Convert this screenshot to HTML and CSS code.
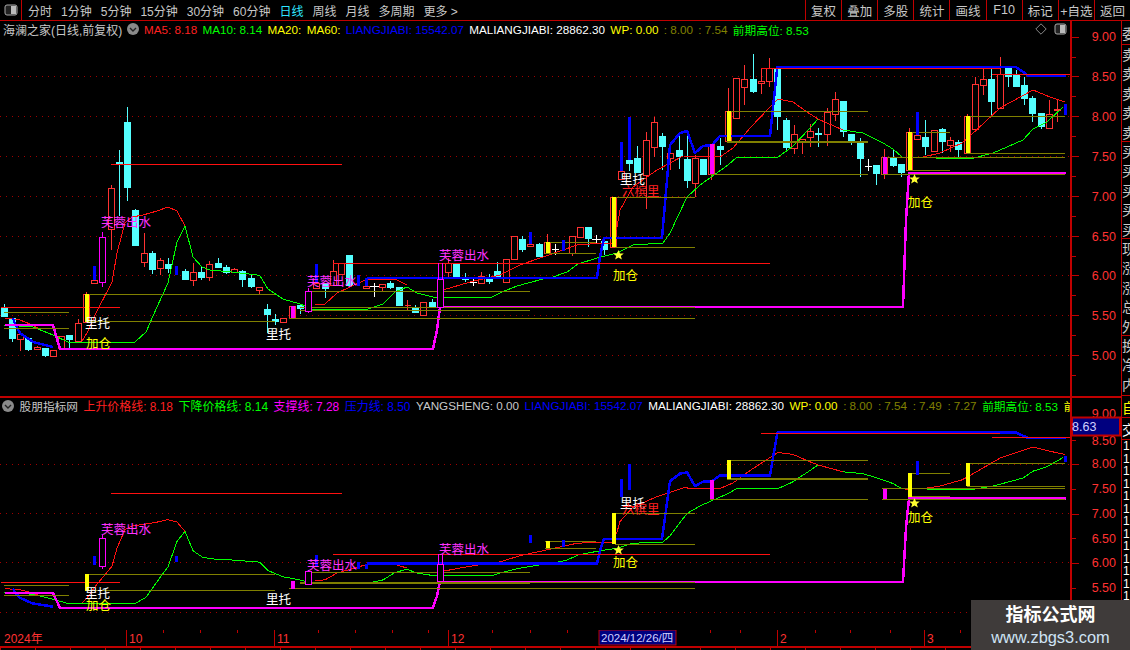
FILE: index.html
```html
<!DOCTYPE html>
<html lang="zh-CN">
<head>
<meta charset="utf-8">
<title>海澜之家 K线</title>
<link rel="stylesheet" href="styles.css">
</head>
<body>
<div class="app">
  <header class="toolbar">
    <div class="layout-btn"><svg width="14" height="12" viewBox="0 0 14 12"><rect x="1" y="1" width="12" height="10" rx="2" class="ic-frame"/><rect x="7" y="2" width="5" height="8" class="ic-fill"/></svg></div>
    <nav class="periods">
      <span>分时</span><span>1分钟</span><span>5分钟</span><span>15分钟</span><span>30分钟</span><span>60分钟</span><span class="active">日线</span><span>周线</span><span>月线</span><span>多周期</span><span>更多 &gt;</span>
    </nav>
    <nav class="tools">
      <span>复权</span><span>叠加</span><span>多股</span><span>统计</span><span>画线</span><span>F10</span><span>标记</span><span>+自选</span><span>返回</span>
    </nav>
  </header>

  <div class="body-row">
    <div class="charts">
      <section class="panel main-panel">
        <div class="info">
          <span class="grey name">海澜之家(日线,前复权)</span>
          <svg class="chev" width="12" height="12" viewBox="0 0 12 12"><circle cx="6" cy="6" r="6" class="chev-bg"/><path d="M3 5l3 3 3-3" class="chev-line"/></svg>
          <span class="red">MA5: 8.18</span><span class="green">MA10: 8.14</span><span class="yellow">MA20:</span><span class="yellow">MA60:</span><span class="blue">LIANGJIABI: 15542.07</span><span class="white">MALIANGJIABI: 28862.30</span><span class="yellow">WP: 0.00</span><span class="olive">: 8.00</span><span class="olive">: 7.54</span><span class="green">前期高位: 8.53</span>
          <span class="info-tools">
            <svg width="12" height="12" viewBox="0 0 12 12"><path d="M6 .8L11.2 6 6 11.2 .8 6z" class="diamond"/></svg>
            <svg width="13" height="12" viewBox="0 0 13 12"><rect x="1" y="1" width="11" height="10" rx="2" class="ic-frame"/><rect x="6" y="2" width="5" height="8" class="ic-fill"/></svg>
          </span>
        </div>
        <svg class="plot main-plot" viewBox="0 39 1070 357" width="1070" height="357">
          <path class="dots" d="M0 76.5H1069M0 116.5H1069M0 156.5H1069M0 196.5H1069M0 236.5H1069M0 275.5H1069M0 315.5H1069M0 355.5H1069"/>
          <path class="wick" d="M20.5 334V351M37.5 346V350M53.5 350V357M78.5 319V341M86.5 292V322M111.5 185V250M144.5 233V267M160.5 258V275M193.5 263V286M209.5 261V281M234.5 268V272M259.5 287V294M407.5 300V310M404.5 305H411M382.5 284V292M423.5 302V315M448.5 258V277M481.5 272V283M547.5 234V253M333.5 260V285M506.5 259V282M514.5 236V259M572.5 236V256M580.5 227V237M613.5 197V247M646.5 132V209M654.5 117V157M670.5 153V170M695.5 155V197M711.5 144V180M728.5 88V141M736.5 78V118M744.5 65V105M761.5 68V94M769.5 58V87M794.5 125V154M802.5 139V154M810.5 124V147M827.5 108V146M835.5 92V121M884.5 149V179M909.5 128V170M934.5 130V151M950.5 137V152M967.5 114V153M975.5 77V129M983.5 67V95M1000.5 57V108M1049.5 100V128M1057.5 100V122M1054 109.5H1061"/>
          <path class="rbody" d="M17.5 334h6v5h-6zM34.5 347h6v2.500h-6zM50.500 350h6v6h-6zM58.500 336h6v12h-6zM75.500 323h6v18h-6zM83.500 294h6v28h-6zM91.500 280h6v3h-6zM108.500 188h6v41h-6zM141.500 253h6v9h-6zM157.500 260h6v8h-6zM190.500 272h6v8h-6zM206.500 264h6v13h-6zM231.500 269h6v3h-6zM256.500 287h6v3h-6zM280.500 318h6v4h-6zM289.500 306h6v12h-6zM313.500 283h6v5h-6zM330.500 271h6v14h-6zM338.500 263h6v11h-6zM363.500 286h6v2h-6zM379.500 284h6v3h-6zM420.500 302h6v13h-6zM445.500 263h6v9h-6zM478.500 276h6v7h-6zM503.500 259h6v23h-6zM511.500 236h6v23h-6zM527.500 244h6v2h-6zM544.500 242h6v11h-6zM569.500 236h6v17h-6zM577.500 227h6v10h-6zM610.500 197h6v50h-6zM618.500 171h6v8h-6zM643.500 140h6v35h-6zM651.500 122h6v25h-6zM667.500 153h6v5h-6zM692.500 158h6v25h-6zM708.500 144h6v30h-6zM725.500 111h6v30h-6zM733.500 78h6v40h-6zM741.500 79h6v8h-6zM758.500 81.500h6v2h-6zM766.500 68h6v13h-6zM791.500 134h6v14h-6zM799.500 139h6v2h-6zM807.500 131h6v6h-6zM824.500 112h6v22h-6zM832.500 99h6v15h-6zM881.500 157h6v17h-6zM906.500 132h6v38h-6zM914.500 135h6v4h-6zM931.500 130h6v21h-6zM947.500 140h6v5h-6zM964.500 116h6v37h-6zM972.500 84h6v45h-6zM980.500 79h6v6h-6zM997.500 74h6v34h-6zM1046.500 114h6v14h-6zM1054.500 109h6v1h-6z"/>
          <path class="cyan" d="M4.500 304V316M1.500 307h6V316h-6zM12.500 318V342M9.500 318h6V338h-6zM28.500 338V351M25.500 338h6V349h-6zM45.500 348V357M42.500 348h6V355h-6zM69.500 335V348M66.500 335h6V339h-6zM119.500 150V216M116.500 162h6V164h-6zM127.500 107V201M124.500 122h6V187h-6zM135.500 209V245M132.500 210h6V245h-6zM152.500 251V274M149.500 253h6V269h-6zM168.500 258V273M165.500 264h6V268h-6zM185.500 269V279M182.500 271h6V279h-6zM201.500 266V280M198.500 272h6V277h-6zM218.500 258V267M215.500 263h6V267h-6zM226.500 265V274M223.500 267h6V272h-6zM242.500 270V287M239.500 271h6V279h-6zM251.500 275V288M248.500 278h6V286h-6zM267.500 304V333M264.500 309h6V314h-6zM275.500 314V325M272.500 319h6V321h-6zM300.500 305V314M297.500 305h6V308h-6zM325.500 283V298M322.500 283h6V288h-6zM349.500 255V285M346.500 255h6V285h-6zM390.500 281V289M387.500 283h6V287h-6zM399.500 287V305M396.500 287h6V305h-6zM415.500 305V313M412.500 307h6V312h-6zM432.500 299V306M429.500 302h6V306h-6zM456.500 264V277M453.500 264h6V277h-6zM465.500 273V282M462.500 278h6V279h-6zM489.500 274V284M486.500 279h6V281h-6zM497.500 262V278M494.500 271h6V278h-6zM522.500 236V252M519.500 239h6V249h-6zM539.500 243V257M536.500 244h6V256h-6zM588.500 227V247M585.500 227h6V238h-6zM604.500 241V255M601.500 241h6V249h-6zM629.500 160V171M626.500 160h6V163h-6zM637.500 146V172M634.500 158h6V172h-6zM662.500 133V170M659.500 136h6V146h-6zM679.500 135V169M676.500 150h6V156h-6zM687.500 133V188M684.500 159h6V180h-6zM703.500 159V174M700.500 159h6V174h-6zM720.500 138V165M717.500 146h6V149h-6zM753.500 54V93M750.500 79h6V91h-6zM777.500 68V130M774.500 68h6V116h-6zM786.500 118V152M783.500 120h6V147h-6zM818.500 128V147M815.500 133.500h6V134.500h-6zM843.500 101V137M840.500 101h6V131h-6zM851.500 134V145M848.500 134h6V141h-6zM860.500 138V177M857.500 143h6V158h-6zM876.500 165V185M873.500 165h6V173h-6zM893.500 150V167M890.500 157h6V165h-6zM901.500 164V177M898.500 164h6V172h-6zM925.500 120V155M922.500 137h6V146h-6zM942.500 128V153M939.500 129h6V141h-6zM958.500 140V159M955.500 142h6V149h-6zM991.500 68V117M988.500 79h6V101h-6zM1008.500 68V87M1005.500 68h6V76h-6zM1016.500 70V87M1013.500 75h6V86h-6zM1024.500 77V105M1021.500 85h6V98h-6zM1032.500 96V122M1029.500 98h6V113h-6zM1041.500 113V129M1038.500 113h6V126h-6z"/>
          <path class="doji" d="M374.500 283V297M370 286.500H379M473.500 278V286M470 282.500H477M555.500 244V255M552 249.500H559M596.500 235V243M592 239.500H601M868.500 159V171M865 166.500H872"/>
          <use href="#shared"/>
          <g class="mark-text">
            <text class="t-mag" x="101" y="227">芙蓉出水</text>
            <text class="t-mag" x="307" y="286">芙蓉出水</text>
            <text class="t-mag" x="439" y="260">芙蓉出水</text>
            <text class="t-white" x="85" y="328">里托</text>
            <text class="t-white" x="266" y="339">里托</text>
            <text class="t-white" x="620" y="184">里托</text>
            <text class="t-red" x="622" y="196">六槟里</text>
            <text class="t-yel" x="86" y="348">加仓</text>
            <text class="t-yel" x="613" y="280">加仓</text>
            <text class="t-yel" x="908" y="207">加仓</text>
          </g>
          <path class="star" d="M618.500 250l1.500 3.500h3.800l-3 2.400 1.100 3.700-3.400-2.100-3.400 2.100 1.100-3.700-3-2.400h3.800zM914.500 174l1.500 3.500h3.800l-3 2.400 1.100 3.700-3.400-2.100-3.400 2.100 1.100-3.700-3-2.400h3.800z"/>
          <defs>
            <g id="shared">
              <polyline class="ma-g" points="4,325 33,327 53,335 68,342 135,342 146,332 157,307 168,283 177,242 185,226 193,257 202,267 210,270 232,272 257,275 260,276 268,289 283,299 300,304 312,309 368,309 383,304 395,292 407,287 417,293 433,297 492,297 502,292 517,286 543,279 553,277 567,272 578,264 597,258 617,253 633,245 663,243 670,233 687,197 700,185 728,165 737,157 778,157 792,147 810,128 818,119 843,130 863,133 883,143 893,149 902,157 970,159 993,153 1007,147 1023,140 1033,129 1047,122 1063,107"/>
              <polyline class="ma-r" points="5,318 20,320 30,324 38,328"/>
              <polyline class="ma-r" points="82,341 87,333 96,313 112,282 117,253 125,223 132,217 143,215 157,211 168,207 177,211 185,226"/>
              <polyline class="ma-r" points="315,305 325,304 337,293 350,287 365,280 395,279 407,285"/>
              <polyline class="ma-r" points="443,290 470,282 500,275 520,265 543,257 577,245 603,243 612,243 617,227 620,210 633,187 657,170 683,156 720,157 733,148 750,128 770,107 778,99 793,102 807,112 818,119 843,130"/>
              <polyline class="ma-r" points="905,158 923,157 940,153 962,143 970,136 1000,108 1033,90 1050,97 1065,102"/>
              <polyline class="blue-l" points="13,318 15,324 20,333 33,342 53,347"/>
              <polyline class="blue-l" points="367,278 597,278 600,257 604,238 662,238 670,145 680,133 687,131 695,153 703,146 712,145 720,136 770,136 777,70 777,67 1016,67 1028,75.500 1066,75.500"/>
              <polyline class="mag-l" points="5,325 53,325 60,349 433,349 437,330 440,307"/>
              <polyline class="mag-l" points="695,307 903,307 906,220 909,173 1066,173"/>
              <path class="mag-thin" d="M440 306.500H695"/>
              <path class="olive-l" d="M4 312.500H69M4 328.500H69M85 294.500H275M85 321.500H275M289 318.500H695M308 291.500H530M300 310.500H530M300 307.500H695M545 242.500H596M545 253.500H596M615 197.500H695M615 247.500H695M727 111.500H868M710 174.500H868M882 157.500H1065M882 174.500H1065M908 132.500H950M908 170.500H950M967 116.500H1065M967 153.500H1065"/>
              <path class="olive-t" d="M727 142H868"/>
              <path class="red-l" d="M111 164.500H342M1 307.500H120M333 263.500H770M761 68.500H1000M992 74.500H1070"/>
              <path class="blue-b" d="M94.500 266V280M176.500 266V275M316.500 264V283M358.500 275V286M366.500 278V286M530.500 232V244M563.500 240V251M621.500 142V171M629.500 117V160M917.500 112V135M1065.500 104V115"/>
              <path class="yel-b" d="M86.500 294V322M547.500 242V253M613.500 197V247M728.500 111V141M909.500 132V170M967.500 116V153"/>
              <path class="mag-b" d="M292.500 306V318M711.500 144V174M884.500 157V174"/>
              <path class="mag-c" d="M102.500 232V237M102.500 282V287M99.500 237h6v45h-6zM308.500 288V291M308.500 311V313M305.500 291h6v20h-6zM438.500 263V279M442.500 263V279M437.500 279h6v28h-6z"/>
            </g>
          </defs>
        </svg>
      </section>

      <section class="panel lower-panel">
        <div class="info info-lower">
          <svg class="chev chev-lower" width="12" height="12" viewBox="0 0 12 12"><circle cx="6" cy="6" r="6" class="chev-bg"/><path d="M3 5l3 3 3-3" class="chev-line"/></svg>
          <span class="grey">股朋指标网</span><span class="red cj">上升价格线: 8.18</span><span class="green cj">下降价格线: 8.14</span><span class="mag cj">支撑线: 7.28</span><span class="blue cj">压力线: 8.50</span><span class="grey">YANGSHENG: 0.00</span><span class="blue">LIANGJIABI: 15542.07</span><span class="white">MALIANGJIABI: 28862.30</span><span class="yellow">WP: 0.00</span><span class="olive">: 8.00</span><span class="olive">: 7.54</span><span class="olive">: 7.49</span><span class="olive">: 7.27</span><span class="green">前期高位: 8.53</span><span class="yellow">前</span>
        </div>
        <svg class="plot lower-plot" viewBox="0 413 1070 217" width="1070" height="217">
          <path class="dots" d="M0 464.500H1069M0 513.500H1069M0 562.500H1069M0 612.500H1069"/>
          <use href="#shared" transform="matrix(1 0 0 .6214 0 391)"/>
          <g class="mark-text">
            <text class="t-mag" x="101" y="534">芙蓉出水</text>
            <text class="t-mag" x="307" y="570">芙蓉出水</text>
            <text class="t-mag" x="439" y="554">芙蓉出水</text>
            <text class="t-white" x="85" y="598">里托</text>
            <text class="t-white" x="266" y="604">里托</text>
            <text class="t-white" x="620" y="508">里托</text>
            <text class="t-red" x="622" y="514">六槟里</text>
            <text class="t-yel" x="86" y="610">加仓</text>
            <text class="t-yel" x="613" y="567">加仓</text>
            <text class="t-yel" x="908" y="522">加仓</text>
          </g>
          <path class="star" d="M618.500 545l1.500 3.500h3.800l-3 2.400 1.100 3.700-3.400-2.100-3.400 2.100 1.100-3.700-3-2.400h3.800zM914.500 498l1.500 3.500h3.800l-3 2.400 1.100 3.700-3.400-2.100-3.400 2.100 1.100-3.700-3-2.400h3.800z"/>
        </svg>
      </section>
    </div>

    <svg class="axis" viewBox="1072 21 49 609" width="49" height="609">
      <path class="ticks" d="M1072 37.500h7M1072 76.500h7M1072 116.500h7M1072 156.500h7M1072 196.500h7M1072 236.500h7M1072 275.500h7M1072 315.500h7M1072 355.500h7M1072 57.500h4M1072 96.500h4M1072 136.500h4M1072 176.500h4M1072 216.500h4M1072 256.500h4M1072 295.500h4M1072 335.500h4M1072 375.500h4M1072 464.500h7M1072 514.500h7M1072 563.500h7M1072 440.500h4M1072 489.500h4M1072 538.500h4M1072 588.500h4"/>
      <path class="sep" d="M1072 396.500H1121"/>
      <g class="prices">
        <text x="1116" y="41">9.00</text><text x="1116" y="81">8.50</text><text x="1116" y="121">8.00</text><text x="1116" y="161">7.50</text><text x="1116" y="201">7.00</text><text x="1116" y="241">6.50</text><text x="1116" y="280">6.00</text><text x="1116" y="320">5.50</text><text x="1116" y="360">5.00</text>
        <text x="1116" y="418">9.00</text><text x="1116" y="445">8.50</text><text x="1116" y="468">8.00</text><text x="1116" y="493">7.50</text><text x="1116" y="518">7.00</text><text x="1116" y="543">6.50</text><text x="1116" y="567">6.00</text><text x="1116" y="592">5.50</text>
      </g>
      <rect class="cur-box" x="1072" y="417.500" width="48" height="18"/>
      <text class="cur-text" x="1072" y="431">8.63</text>
    </svg>

    <aside class="side">
      <div class="cell c1">委</div>
      <div class="cell c2">卖卖卖卖卖</div>
      <div class="cell c2">买买买买买</div>
      <div class="cell c2">现涨涨总外</div>
      <div class="cell c3">换净内</div>
      <div class="cell c4">自</div>
      <div class="cell c5">交</div>
      <div class="nums">1 1 1 1 1 1 1 1 1 1 1 1 1 1 1 1</div>
    </aside>
  </div>

  <svg class="timeaxis" viewBox="0 0 1130 16" width="1130" height="16">
    <path class="ticks" d="M163.500 0v3M200.500 0v3M237.500 0v3M318.500 0v3M355.500 0v3M392.500 0v3M428.500 0v3M492.500 0v3M530.500 0v3M567.500 0v3M710.500 0v3M740.500 0v3M815.500 0v3M850.500 0v3M890.500 0v3M960.500 0v3"/>
    <path class="sep-thin" d="M126.500 0v16M274.500 0v16M448.500 0v16M777.500 0v16M924.500 0v16"/>
    <g class="times">
      <text x="4" y="13">2024年</text><text x="129" y="13">10</text><text x="277" y="13">11</text><text x="451" y="13">12</text><text x="780" y="13">2</text><text x="927" y="13">3</text>
    </g>
    <rect class="date-box" x="599" y="0" width="77" height="15"/>
    <text class="date-text" x="601" y="12">2024/12/26/四</text>
  </svg>
  <div class="foot"></div>

  <div class="watermark">
    <div class="wm-title">指标公式网</div>
    <div class="wm-url">www.zbgs3.com</div>
  </div>
</div>
</body>
</html>
```
FILE: styles.css
```css
* { box-sizing: border-box; }
html, body { margin: 0; padding: 0; background: #000; }
body { font-family: "Liberation Sans", "Noto Sans CJK SC", sans-serif; font-size: 11.7px; color: #c8c8c8; }
svg { display: block; flex: none; }

.app { position: relative; width: 1130px; height: 650px; overflow: hidden; display: flex; flex-direction: column; background: #000; }

.toolbar { display: flex; align-items: stretch; height: 21px; flex: none; border-bottom: 1px solid #c00000; font-size: 12px; color: #c8c8c8; }
.layout-btn { width: 22px; border-right: 1px solid #c00000; display: flex; align-items: center; justify-content: center; }
.periods { display: flex; align-items: center; gap: 9px; padding-left: 6px; flex: 1; white-space: nowrap; }
.periods .active { color: #2ee6ff; }
.tools { display: flex; width: 325px; }
.tools span { flex: 1; display: flex; align-items: center; justify-content: center; border-left: 1px solid #c00000; white-space: nowrap; font-size: 12.5px; }
.ic-frame { fill: #222; stroke: #aaa; stroke-width: 1; }
.ic-fill { fill: #bbb; }

.body-row { display: flex; flex: none; height: 609px; }
.charts { width: 1072px; display: flex; flex-direction: column; flex: none; border-right: 2px solid #c00000; }
.panel { display: flex; flex-direction: column; flex: none; }
.main-panel { height: 375px; }
.lower-panel { height: 234px; border-top: 2px solid #c00000; }
.info { display: flex; align-items: center; height: 18px; gap: 5.3px; padding: 0 0 2px 3px; white-space: nowrap; overflow: hidden; flex: none; }
.info-lower { height: 15px; padding: 0 0 0 2px; gap: 5.5px; }
.cj { font-size: 11.95px; }
.name { font-size: 12px; }
.chev { margin-left: -1px; }
.chev-lower { margin-left: 0; }
.chev-bg { fill: #8a8a8a; }
.chev-line { fill: none; stroke: #222; stroke-width: 1.4; }
.info-tools { margin-left: auto; display: flex; gap: 7px; align-items: center; padding-right: 3px; }
.diamond { fill: none; stroke: #888; }
.grey { color: #c8c8c8; }
.red { color: #ff2020; }
.green { color: #00ff00; }
.yellow { color: #ffff00; }
.blue { color: #0000ff; }
.white { color: #fff; }
.olive { color: #808000; }
.mag { color: #ff00ff; }

.plot { background: #000; }
.dots { stroke: #a00000; stroke-width: 1; stroke-dasharray: 1 5; fill: none; shape-rendering: crispEdges; }
.wick, .rbody, .cyan, .doji, .olive-l, .olive-t, .red-l, .blue-b, .yel-b, .mag-b, .mag-c, .mag-thin, .blue-l, .mag-l, .ma-g, .ma-r { shape-rendering: crispEdges; }
.wick { stroke: #ff3232; fill: none; }
.rbody { stroke: #ff3232; fill: #000; }
.cyan { stroke: #54ffff; fill: #54ffff; }
.doji { stroke: #fff; fill: none; }
#shared path, #shared polyline { vector-effect: non-scaling-stroke; fill: none; }
.olive-l { stroke: #808000; stroke-width: 1; }
.olive-t { stroke: #808000; stroke-width: 2; }
.red-l { stroke: #ff1010; stroke-width: 1; }
.ma-g { stroke: #00ff00; stroke-width: 1; }
.ma-r { stroke: #ff1010; stroke-width: 1; }
.blue-l { stroke: #0000ff; stroke-width: 2.5; stroke-linejoin: round; }
.mag-l { stroke: #ff00ff; stroke-width: 2.5; }
.mag-thin { stroke: #ff00ff; stroke-width: 1; }
.blue-b { stroke: #0000ff; stroke-width: 3; }
.yel-b { stroke: #ffff00; stroke-width: 4; }
.mag-b { stroke: #ff00ff; stroke-width: 4; }
#shared .mag-c { stroke: #ff00ff; stroke-width: 1; fill: #000; }

.mark-text { font-family: "Noto Sans CJK SC", sans-serif; font-size: 12.5px; }
.t-mag { fill: #ff32ff; }
.t-white { fill: #fff; }
.t-red { fill: #ff2020; }
.t-yel { fill: #ffff00; }
.star { fill: #ffff30; }

.axis { margin: 0; }
.ticks { stroke: #c00000; stroke-width: 1; shape-rendering: crispEdges; fill: none; }
.sep { stroke: #c00000; stroke-width: 2; shape-rendering: crispEdges; fill: none; }
.sep-thin { stroke: #c00000; stroke-width: 1; shape-rendering: crispEdges; fill: none; }
.prices text { fill: #ff3232; font-size: 12.5px; text-anchor: end; }
.cur-box { fill: #00007f; stroke: #c00000; stroke-width: 2; }
.cur-text { fill: #d0d0ff; font-size: 12.5px; }

.side { width: 9px; flex: none; border-left: 1px solid #c00000; overflow: hidden; display: flex; flex-direction: column; font-family: "Noto Sans CJK SC", sans-serif; font-size: 14px; color: #c8c8c8; }
.cell { width: 14px; line-height: 19.4px; word-break: break-all; border-bottom: 1px solid #c00000; flex: none; }
.c1 { height: 24px; line-height: 24px; }
.c2 { height: 97px; }
.c3 { height: 60px; }
.c4 { height: 22px; line-height: 22px; color: #ffff00; }
.c5 { height: 22px; line-height: 22px; color: #fff; }
.nums { width: 8px; font-family: "Liberation Sans", sans-serif; font-size: 12px; line-height: 12.5px; color: #fff; word-break: break-all; padding-left: 1px; }

.timeaxis { flex: none; }
.times text { fill: #ff3232; font-size: 12px; }
.date-box { fill: #00007f; stroke: #c00000; }
.date-text { fill: #d0d0ff; font-size: 11.5px; }
.foot { flex: 1; border-top: 2px solid #c00000; background: repeating-linear-gradient(90deg, #c00000 0, #c00000 1px, #000 1px, #000 35px); }

.watermark { position: absolute; left: 971px; top: 600px; width: 159px; height: 50px; background: #3f3b3a; display: flex; flex-direction: column; align-items: center; justify-content: center; font-family: "Noto Sans CJK SC", sans-serif; line-height: 1; }
.wm-title { color: #fff; font-size: 18px; font-weight: 700; margin-bottom: 7px; }
.wm-url { color: #cfe3f5; font-size: 16.4px; font-family: "Liberation Sans", sans-serif; }
```
